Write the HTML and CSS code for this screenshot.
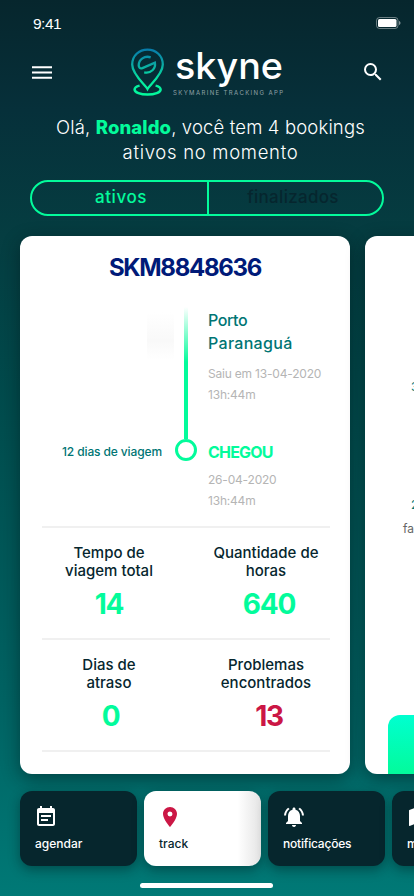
FILE: index.html
```html
<!DOCTYPE html>
<html lang="pt-BR">
<head>
<meta charset="utf-8">
<meta name="viewport" content="width=device-width, initial-scale=1">
<title>Skyne</title>
<link rel="stylesheet" href="styles.css">
</head>
<body>
<div class="app">
  <div class="status">
    <span class="time">9:41</span>
    <svg class="battery" width="25" height="12" viewBox="0 0 25 12"><rect x=".5" y=".5" width="21.500" height="11" rx="3" fill="none" stroke="#fff" stroke-opacity=".4"/><rect x="2" y="2" width="18.500" height="8" rx="1.500" fill="#fff"/><path d="M23 4v4c.9-.3 1.500-1.100 1.500-2S23.900 4.300 23 4z" fill="#fff" fill-opacity=".5"/></svg>
  </div>
  <header class="header">
    <svg class="menu" width="20" height="13" viewBox="0 0 20 13"><path d="M0 1.200h20M0 6.500h20M0 11.800h20" stroke="#fff" stroke-width="2"/></svg>
    <svg class="logo" width="153" height="52" viewBox="0 0 153 52">
      <defs><linearGradient id="pin" gradientUnits="userSpaceOnUse" x1="17" y1="1" x2="17" y2="49"><stop offset="0" stop-color="#077baa"/><stop offset=".32" stop-color="#0ba7a4"/><stop offset=".65" stop-color="#05e8a0"/><stop offset="1" stop-color="#03fb9b"/></linearGradient></defs>
      <g fill="none" stroke="url(#pin)" stroke-width="2.300">
        <path d="M16.500 41C14.200 36.800 1.200 26.500 1.200 16.500C1.200 7.600 8 1.600 16.500 1.600S31.800 7.600 31.800 16.500C31.800 26.500 18.800 36.800 16.500 41z"/>
        <path d="M8.600 37.600C5.500 38.300 3.600 39.700 3.600 41.500C3.600 44.500 9.500 46.600 16.600 46.600S29.600 44.500 29.600 41.500C29.600 39.700 27.700 38.300 24.600 37.600" stroke-width="2.500"/>
        <path d="M19.700 9.300C13.500 7.200 7.800 11.500 7.700 17.200C7.700 19.700 9.200 21 11.400 20.100L23.900 14.700C25 20.500 20 25.800 13.200 24.300"/>
      </g>
      <text class="brand" x="44" y="31" textLength="108" lengthAdjust="spacingAndGlyphs">skyne</text>
      <text class="tagline" x="42" y="47" textLength="110" lengthAdjust="spacing">SKYMARINE TRACKING APP</text>
    </svg>
    <svg class="search" width="24" height="24" viewBox="0 0 24 24"><path fill="#fff" d="M15.500 14h-.79l-.28-.27A6.470 6.470 0 0 0 16 9.500 6.500 6.500 0 1 0 9.500 16c1.610 0 3.090-.59 4.230-1.570l.27.28v.79l5 4.990L20.490 19l-4.990-5zm-6 0C7.010 14 5 11.990 5 9.500S7.010 5 9.500 5 14 7.010 14 9.500 11.990 14 9.500 14z"/></svg>
  </header>
  <p class="greeting"><span class="g1">Olá, <b>Ronaldo</b>, você tem 4 bookings</span><br><span class="g2">ativos no momento</span></p>
  <div class="tabs"><div class="tab on">ativos</div><div class="tab off">finalizados</div></div>
  <main class="cards">
    <section class="card">
      <h1>SKM8848636</h1>
      <div class="route">
        <div class="duration"><span>12 dias de viagem</span></div>
        <div class="track"><div class="line"></div><div class="dot"></div></div>
        <div class="stops">
          <div class="port p1">Porto</div><div class="port p2">Paranaguá</div>
          <div class="date d1">Saiu em 13-04-2020</div><div class="date hr">13h:44m</div>
          <div class="arrived">CHEGOU</div>
          <div class="date d2">26-04-2020</div><div class="date hr">13h:44m</div>
        </div>
      </div>
      <div class="stats">
        <div class="stat"><div class="label">Tempo de<br>viagem total</div><div class="value">14</div></div>
        <div class="stat"><div class="label">Quantidade de<br>horas</div><div class="value">640</div></div>
      </div>
      <div class="stats">
        <div class="stat"><div class="label">Dias de<br>atraso</div><div class="value zero">0</div></div>
        <div class="stat"><div class="label">Problemas<br>encontrados</div><div class="value bad">13</div></div>
      </div>
    </section>
    <section class="card next">
      <div class="peek a">3 dias</div>
      <div class="peek b">2 dias</div>
      <div class="peek c">faltam</div>
      <div class="action"></div>
    </section>
  </main>
  <nav class="nav">
    <div class="item"><svg width="24" height="24" viewBox="0 0 24 24"><path fill="#fff" d="M17 10H7v2h10v-2zm2-7h-1V1h-2v2H8V1H6v2H5c-1.110 0-1.990.9-1.990 2L3 19c0 1.100.89 2 2 2h14c1.100 0 2-.9 2-2V5c0-1.100-.9-2-2-2zm0 16H5V8h14v11zm-5-5H7v2h7v-2z"/></svg><span class="agendar">agendar</span></div>
    <div class="item active"><svg width="24" height="24" viewBox="0 0 24 24"><path fill="#cb1745" d="M12 2C8.130 2 5 5.130 5 9c0 5.250 7 13 7 13s7-7.750 7-13c0-3.870-3.130-7-7-7zm0 9.500a2.500 2.500 0 0 1 0-5 2.500 2.500 0 0 1 0 5z"/></svg><span class="trk">track</span></div>
    <div class="item"><svg width="24" height="24" viewBox="0 0 24 24"><path fill="#fff" d="M7.580 4.080L6.150 2.650C3.750 4.480 2.170 7.300 2.030 10.500h2c.15-2.650 1.510-4.970 3.550-6.420zm12.390 6.420h2c-.15-3.200-1.730-6.020-4.120-7.850l-1.420 1.430c2.020 1.450 3.390 3.770 3.540 6.420zM18 11c0-3.070-1.640-5.640-4.500-6.320V4c0-.83-.67-1.500-1.500-1.500s-1.500.67-1.500 1.500v.68C7.630 5.360 6 7.920 6 11v5l-2 2v1h16v-1l-2-2v-5zm-6 11c.14 0 .27-.01.4-.04.65-.14 1.180-.58 1.440-1.180.1-.24.15-.5.150-.78h-4c.01 1.100.9 2 2.010 2z"/></svg><span class="notif">notificações</span></div>
    <div class="item"><svg width="24" height="24" viewBox="0 0 24 24"><path fill="#fff" d="M20.500 3l-.16.03L15 5.100 9 3 3.360 4.900c-.21.07-.36.25-.36.48V20.500c0 .28.22.5.5.500l.16-.03L9 18.900l6 2.100 5.640-1.900c.21-.07.36-.25.36-.48V3.500c0-.28-.22-.5-.5-.5z"/></svg><span>mapa</span></div>
  </nav>
  <div class="home"></div>
</div>
</body>
</html>
```
FILE: styles.css
```css
* { box-sizing: border-box; }
body { margin: 0; }
.app { width: 414px; height: 896px; overflow: hidden; font-family: Inter, "Noto Sans", sans-serif; color: #fff; background: linear-gradient(#06262d 0, #06303a 110px, #053d41 235px, #004e4f 430px, #006363 700px, #007976 896px); }
.status { height: 44px; padding: 17px 13px 0 33px; display: flex; justify-content: space-between; align-items: flex-start; }
.time { font: 15.500px/14px "Liberation Sans", sans-serif; letter-spacing: -.5px; }
.header { height: 71px; padding: 4px 29px 0 32px; display: flex; align-items: flex-start; }
.menu { margin-top: 18px; }
.logo { margin-left: 79px; overflow: visible; }
.search { margin: 12px 0 0 auto; }
.brand { font: 500 37px Inter, sans-serif; fill: #fff; }
.tagline { font: 400 6px Inter, sans-serif; fill: #91a2a7; }
.greeting { margin: 0; height: 65px; padding-left: 7px; text-align: center; font-size: 18.500px; line-height: 25px; font-weight: 300; }
.g1 { letter-spacing: .15px; }
.g2 { letter-spacing: .7px; }
.greeting b { color: #03fb9b; font-weight: 800; letter-spacing: .1px; }
.tabs { display: flex; width: 354px; height: 36px; margin: 0 0 20px 30px; border: 2px solid #03fb9b; border-radius: 18px; }
.tab { flex: 1; text-align: center; font-size: 17px; line-height: 31px; font-weight: 500; }
.on { color: #03fb9b; border-right: 2px solid #03fb9b; padding-left: 3px; letter-spacing: .6px; }
.off { flex: 0 0 173px; color: #06262e; padding-right: 5px; letter-spacing: .3px; }
.cards { display: flex; gap: 15px; width: 695px; padding-left: 20px; height: 538px; }
.card { flex: 0 0 330px; height: 538px; background: #fff; border-radius: 12px; box-shadow: 0 5px 18px rgba(0,20,22,.48); overflow: hidden; }
h1 { margin: 17px 0 0; height: 30px; line-height: 30px; font-size: 24px; font-weight: 700; letter-spacing: -1.300px; text-align: center; color: #001a78; }
.route { margin: 24px 20px 0 22px; height: 221px; border-bottom: 2px solid #f0f0f0; display: grid; grid-template-columns: 132px 23px 1fr; }
.duration { padding: 136px 12px 0 0; text-align: right; color: #007574; font-size: 12px; letter-spacing: -.12px; line-height: 18px; white-space: nowrap; font-weight: 500; background: linear-gradient(#fff, #f9f9f9 60%, #fff) 105px 5px / 27px 48px no-repeat; }
.track { display: flex; flex-direction: column; align-items: center; }
.line { width: 4px; height: 132px; background: linear-gradient(#fff, #03fb9b 55px); }
.dot { width: 22px; height: 22px; border: 3px solid #03fb9b; border-radius: 50%; }
.stops { padding-left: 11px; color: #007574; }
.port { height: 23px; font-size: 16px; line-height: 23px; font-weight: 500; }
.p1 { margin-top: 2px; letter-spacing: -.4px; }
.p2 { letter-spacing: .3px; }
.date { height: 21px; font-size: 12px; line-height: 21px; color: #b5b5b5; white-space: nowrap; letter-spacing: -.2px; }
.d1 { margin-top: 8px; }
.arrived { height: 24px; margin-top: 35px; font-size: 16px; line-height: 24px; font-weight: 700; letter-spacing: -.8px; color: #03fb9b; }
.d2 { margin-top: 5px; }
.stats { margin: 0 20px 0 22px; height: 112px; display: grid; grid-template-columns: 134px 1fr; column-gap: 26px; border-bottom: 2px solid #f0f0f0; padding-top: 16px; }
.stat { text-align: center; }
.label { height: 36px; color: #06262e; font-size: 15px; line-height: 18px; font-weight: 500; white-space: nowrap; }
.value { height: 34px; margin-top: 7px; line-height: 34px; font-size: 28px; font-weight: 700; letter-spacing: -1.200px; color: #03fb9b; }
.zero { padding-left: 3px; }
.bad { color: #cb1745; }
.stats .stat:last-child .label { position: relative; left: -3px; }
.stats .stat:last-child { padding-left: 1px; margin-right: -5px; }
.next { padding-top: 141px; display: flex; flex-direction: column; }
.peek { margin-left: 46px; height: 20px; font-size: 12px; line-height: 20px; color: #007574; }
.b { margin-top: 98px; }
.c { margin: 4px 0 0 38px; color: #666; }
.action { width: 280px; margin: auto 0 0 23px; height: 59px; border-radius: 12px 12px 0 0; background: linear-gradient(#00ffd0, #03fb9b); }
.nav { margin-top: 17px; padding-left: 20px; display: flex; gap: 7px; width: 600px; }
.item { width: 117px; height: 75px; flex: none; background: #06262d; border-radius: 12px; padding: 14px 0 0 14px; box-shadow: 0 4px 12px rgba(0,20,22,.4); display: flex; flex-direction: column; font-size: 12px; line-height: 18px; font-weight: 500; }
.item span { margin: 6px 0 0 1px; }
.notif { letter-spacing: -.2px; }
.active { background: linear-gradient(90deg, #fff 80%, #e4e4e4); color: #06262e; }
.home { width: 133px; height: 5px; margin: 17px 0 0 140px; background: #fff; border-radius: 3px; }
```
